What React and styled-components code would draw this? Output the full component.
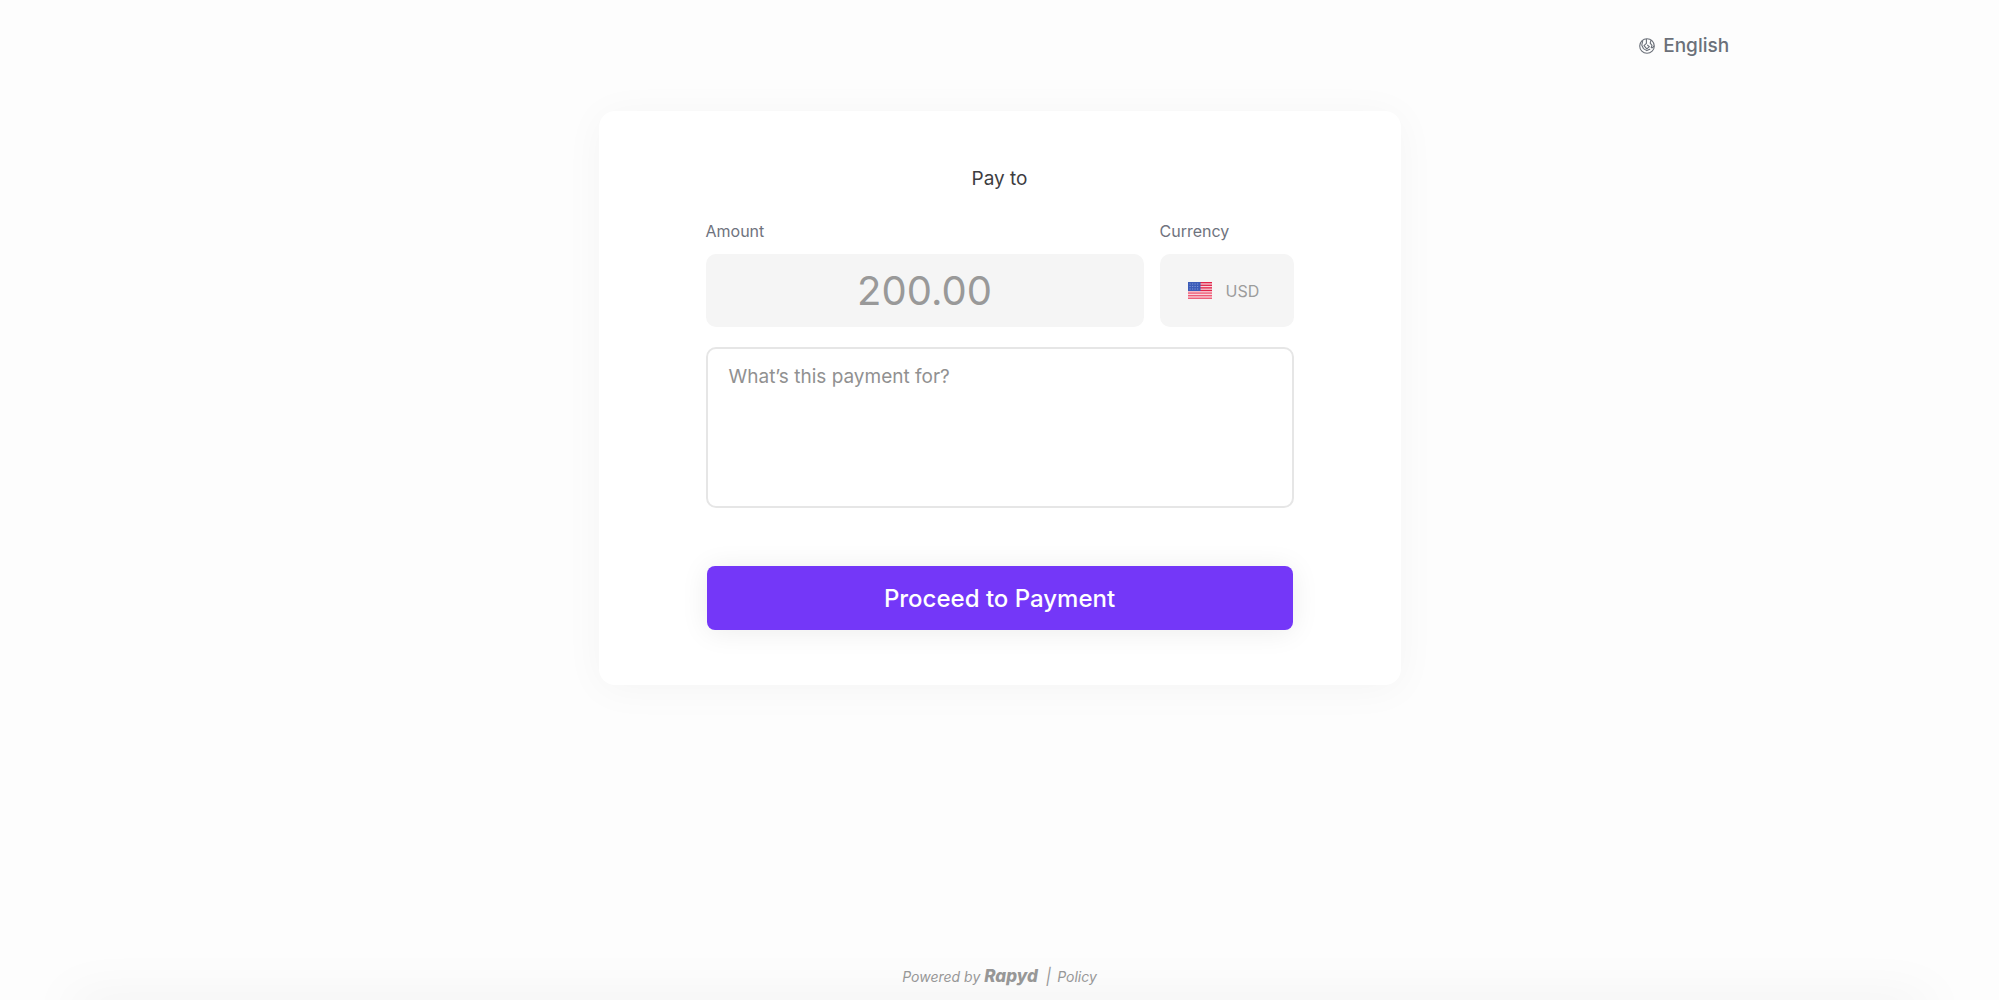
import React from "react";
import styled, { createGlobalStyle } from "styled-components";

const GlobalStyle = createGlobalStyle`
  *, *::before, *::after { box-sizing: border-box; }
  body {
    margin: 0;
    background: #fdfdfd;
    font-family: Inter, "Liberation Sans", sans-serif;
    -webkit-font-smoothing: antialiased;
  }
  button, input, select, textarea { font: inherit; }
`;

const Page = styled.div`
  min-height: 100vh;
  display: flex;
  flex-direction: column;
  overflow: hidden;
`;

const Header = styled.header`
  width: 73%;
  margin: 0 auto;
  padding: 32px 0 51px;
  display: flex;
  justify-content: flex-end;
`;

const LanguageButton = styled.button`
  display: flex;
  align-items: center;
  gap: 8px;
  padding: 0;
  border: 0;
  background: none;
  color: #6b7079;
  font-size: 19px;
  font-weight: 500;
  line-height: 28px;
  cursor: pointer;
`;

const Main = styled.main`
  flex: 1;
  display: flex;
  justify-content: center;
  align-items: flex-start;
`;

const Card = styled.form`
  width: 100%;
  max-width: 802px;
  padding: 54px 107px 55px;
  display: flex;
  flex-direction: column;
  border-radius: 16px;
  background: #fff;
  box-shadow: 0 4px 40px rgba(0, 0, 0, 0.04);
`;

const Title = styled.h1`
  margin: 0 0 26px;
  color: #3d3d3f;
  font-size: 19px;
  font-weight: 400;
  line-height: 28px;
  text-align: center;
`;

const FieldRow = styled.div`
  display: flex;
  gap: 16px;
  margin-bottom: 20px;
`;

const Field = styled.div`
  display: flex;
  flex-direction: column;
  gap: 11px;
  flex: ${(p) => (p.$grow ? "1 1 0" : "0 0 134px")};
  min-width: 0;
`;

const Label = styled.label`
  color: #6f737e;
  font-size: 16px;
  line-height: 24px;
`;

const AmountInput = styled.input`
  width: 100%;
  height: 73px;
  padding: 0 16px;
  border: 0;
  border-radius: 10px;
  background: #f5f5f5;
  color: #999;
  font-size: 40px;
  text-align: center;
`;

const CurrencyBox = styled.div`
  height: 73px;
  padding: 0 28px;
  display: flex;
  align-items: center;
  gap: 14px;
  border-radius: 10px;
  background: #f5f5f5;
`;

const CurrencySelect = styled.select`
  flex: 1;
  min-width: 0;
  padding: 0;
  border: 0;
  appearance: none;
  background: none;
  color: #9c9c9c;
  font-size: 16px;
  line-height: 24px;
`;

const Note = styled.textarea`
  width: 100%;
  height: 161px;
  padding: 14px 21px;
  border: 2px solid #e6e6e6;
  border-radius: 10px;
  background: #fff;
  color: #3d3d3f;
  font-size: 19px;
  line-height: 28px;
  resize: none;
  &::placeholder { color: #919191; opacity: 1; }
`;

const SubmitButton = styled.button`
  height: 64px;
  margin: 58px 1px 0;
  border: 0;
  border-radius: 8px;
  background: #7437f8;
  color: #fff;
  font-size: 24px;
  font-weight: 500;
  box-shadow: 0 2px 28px rgba(0, 0, 0, 0.08);
  cursor: pointer;
`;

const Footer = styled.footer`
  margin: 0 60px;
  padding: 32px 0 11px;
  display: flex;
  justify-content: center;
  align-items: baseline;
  color: #999;
  font-size: 14px;
  font-style: italic;
  line-height: 24px;
`;

const FootLink = styled.a`
  color: inherit;
  text-decoration: none;
`;

const Brand = styled(FootLink)`
  margin: 0 8px 0 4px;
  font-size: 17px;
  font-weight: 800;
  font-feature-settings: "cv11";
`;

const Divider = styled.span`
  margin-right: 6px;
  font-size: 16px;
`;

const BottomShade = styled.div`
  height: 1px;
  margin: 0 76px -1px;
  box-shadow: 0 10px 52px 4px rgba(0, 0, 0, 0.17);
`;

function GlobeIcon() {
  return (
    <svg width="16" height="16" viewBox="0 0 16 16" fill="none" stroke="#6b7079" strokeWidth="1.1" strokeLinejoin="round" strokeLinecap="round" aria-hidden="true">
      <circle cx="8" cy="8" r="7.3" />
      <path d="M7.4 1.2v4.2L5 7.6l2.8 3.2 2.6-2.2L8.6 7.2" />
      <path d="M3.6 3.4 2.8 7.2l1.6 3.4 3.4 2 3-1.4M12 2.4l-.8 2.8L13 7.4l-.8 2.2 1.6 0 .8-1.4" />
    </svg>
  );
}

function UsFlag() {
  const stripes = [0, 1, 2, 3, 4, 5, 6];
  return (
    <svg width="24" height="17" viewBox="0 0 24 17" aria-hidden="true">
      <rect width="24" height="17" fill="#f8d5dc" />
      {stripes.map((i) => (
        <rect key={i} y={i * 2.6} width="24" height="1.35" fill={i < 4 ? "#e0244a" : "#ef5a76"} />
      ))}
      <rect width="12.5" height="9" fill="#3c5cb8" />
      {[1.5, 4, 6.5, 9].map((x) =>
        [1.5, 4, 6.5].map((y) => (
          <rect key={`${x}-${y}`} x={x} y={y} width="1.2" height="1" fill="#7f97d6" />
        ))
      )}
    </svg>
  );
}

export default function App() {
  return (
    <>
      <GlobalStyle />
      <Page>
        <Header>
          <LanguageButton type="button">
            <GlobeIcon />
            English
          </LanguageButton>
        </Header>
        <Main>
          <Card onSubmit={(e) => e.preventDefault()}>
            <Title>Pay to</Title>
            <FieldRow>
              <Field $grow>
                <Label htmlFor="amount">Amount</Label>
                <AmountInput id="amount" type="text" value="200.00" readOnly />
              </Field>
              <Field>
                <Label htmlFor="currency">Currency</Label>
                <CurrencyBox>
                  <UsFlag />
                  <CurrencySelect id="currency" defaultValue="USD">
                    <option>USD</option>
                  </CurrencySelect>
                </CurrencyBox>
              </Field>
            </FieldRow>
            <Note aria-label="What’s this payment for?" placeholder="What’s this payment for?" />
            <SubmitButton type="submit">Proceed to Payment</SubmitButton>
          </Card>
        </Main>
        <Footer>
          <span>Powered by</span>
          <Brand href="#rapyd">Rapyd</Brand>
          <Divider>|</Divider>
          <FootLink href="#policy">Policy</FootLink>
        </Footer>
        <BottomShade />
      </Page>
    </>
  );
}
